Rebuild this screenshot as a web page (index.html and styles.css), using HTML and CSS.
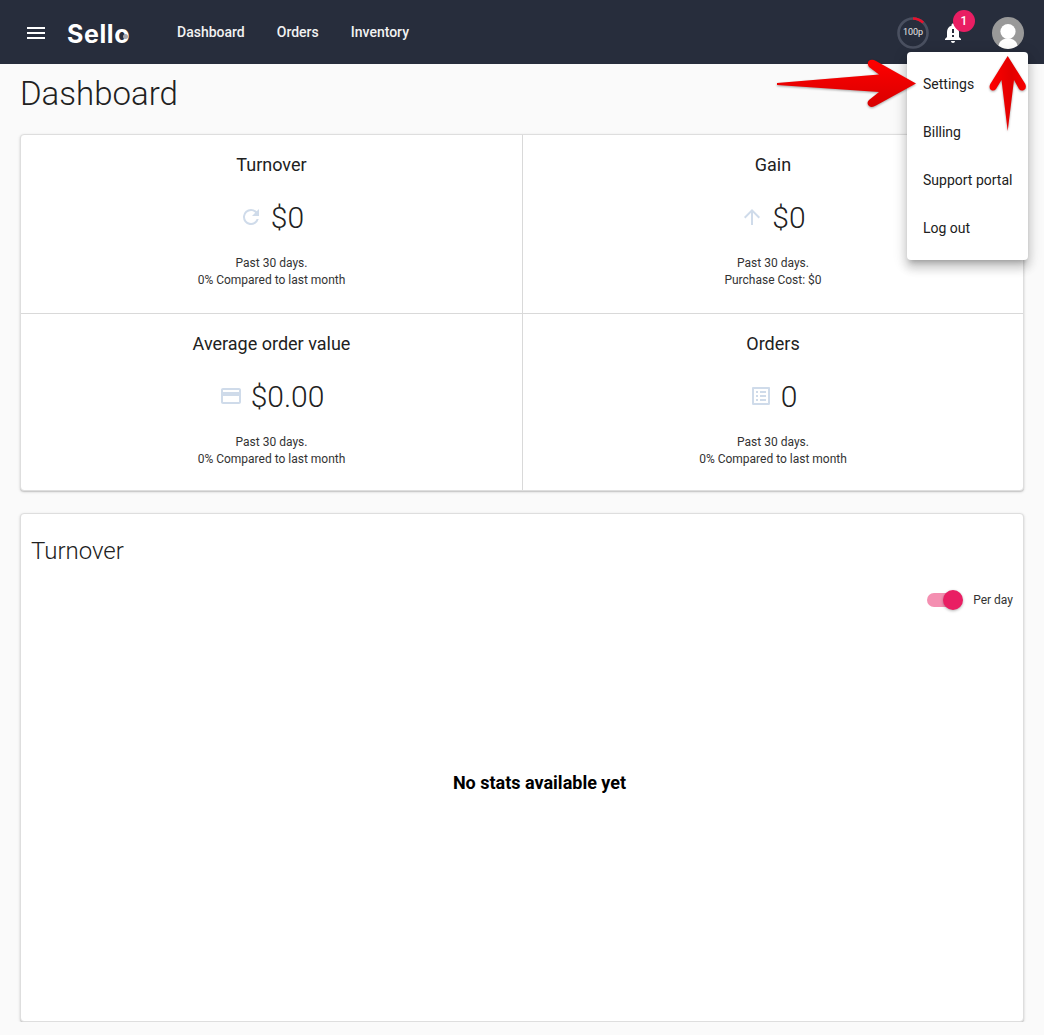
FILE: index.html
```html
<!DOCTYPE html>
<html lang="en">
<head>
  <meta charset="UTF-8">
  <title>Sello Dashboard</title>
  <link rel="stylesheet" href="styles.css">
</head>
<body>
  <header class="topbar">
    <button class="menu-btn" aria-label="Menu"><span></span><span></span><span></span></button>
    <div class="logo">Sello<i class="logo-dot"></i></div>
    <nav class="nav">
      <a>Dashboard</a>
      <a>Orders</a>
      <a>Inventory</a>
    </nav>
    <div class="topbar-right">
      <div class="quota">
        <svg width="32" height="32" viewBox="0 0 32 32">
          <circle cx="16" cy="16" r="14.5" fill="none" stroke="#4a5060" stroke-width="2.6"/>
          <path d="M16 1.5A14.5 14.5 0 0 1 26.2 5.7" fill="none" stroke="#e8112d" stroke-width="2.6"/>
        </svg>
        <span>100p</span>
      </div>
      <div class="bell">
        <svg width="24" height="24" viewBox="0 0 24 24"><path fill="#fff" d="M12 22c1.1 0 2-.9 2-2h-4c0 1.1.9 2 2 2zm6-6v-5c0-3.07-1.63-5.64-4.5-6.32V4c0-.83-.67-1.5-1.5-1.5s-1.5.67-1.5 1.5v.68C7.64 5.36 6 7.92 6 11v5l-2 2v1h16v-1l-2-2zm-5 0h-2v-2h2v2zm0-4h-2V8h2v4z"/></svg>
        <span class="badge">1</span>
      </div>
      <div class="avatar">
        <svg width="32" height="32" viewBox="0 0 32 32">
          <circle cx="16" cy="16" r="16" fill="#999"/>
          <circle cx="16" cy="14.500" r="7.600" fill="#fff"/>
          <path d="M6.500 28.800C7 24.200 11 21.500 16 21.500s9 2.700 9.500 7.300A16 16 0 0 1 6.500 28.800z" fill="#fff"/>
        </svg>
      </div>
    </div>
  </header>

  <main class="page">
    <h1 class="page-title">Dashboard</h1>

    <section class="card stats">
      <div class="stat">
        <h3>Turnover</h3>
        <div class="stat-value">
          <svg class="stat-icon" width="24" height="24" viewBox="0 0 24 24"><path d="M17.650 6.350A7.960 7.960 0 0 0 12 4a8 8 0 1 0 7.730 10h-2.080A6 6 0 1 1 12 6c1.660 0 3.140.690 4.220 1.780L13 11h7V4l-2.350 2.350z"/></svg>
          <span>$0</span>
        </div>
        <p>Past 30 days.<br>0% Compared to last month</p>
      </div>
      <div class="stat">
        <h3>Gain</h3>
        <div class="stat-value">
          <svg class="stat-icon" width="24" height="24" viewBox="0 0 24 24"><path d="M4 12l1.410 1.410L11 7.830V20h2V7.830l5.580 5.590L20 12l-8-8-8 8z"/></svg>
          <span>$0</span>
        </div>
        <p>Past 30 days.<br>Purchase Cost: $0</p>
      </div>
      <div class="stat">
        <h3>Average order value</h3>
        <div class="stat-value">
          <svg class="stat-icon" width="24" height="24" viewBox="0 0 24 24"><path d="M20 4H4c-1.110 0-2 .890-2 2v12c0 1.110.890 2 2 2h16c1.110 0 2-.890 2-2V6c0-1.110-.890-2-2-2zm0 14H4v-6h16v6zm0-10H4V6h16v2z"/></svg>
          <span>$0.00</span>
        </div>
        <p>Past 30 days.<br>0% Compared to last month</p>
      </div>
      <div class="stat">
        <h3>Orders</h3>
        <div class="stat-value">
          <svg class="stat-icon" width="24" height="24" viewBox="0 0 24 24"><path d="M19 5v14H5V5h14m1.100-2H3.900c-.500 0-.900.400-.900.900v16.200c0 .400.400.900.900.900h16.200c.400 0 .900-.500.900-.900V3.900c0-.500-.500-.900-.900-.900zM11 7h6v2h-6V7zm0 4h6v2h-6v-2zm0 4h6v2h-6v-2zM7 7h2v2H7V7zm0 4h2v2H7v-2zm0 4h2v2H7v-2z"/></svg>
          <span>0</span>
        </div>
        <p>Past 30 days.<br>0% Compared to last month</p>
      </div>
    </section>

    <section class="card chart">
      <h2>Turnover</h2>
      <div class="toggle-row">
        <div class="toggle"><span class="thumb"></span></div>
        <label>Per day</label>
      </div>
      <div class="empty">No stats available yet</div>
    </section>
  </main>

  <ul class="dropdown">
    <li>Settings</li>
    <li>Billing</li>
    <li>Support portal</li>
    <li>Log out</li>
  </ul>

  <svg class="arrows" width="1044" height="140" viewBox="0 0 1044 140">
    <defs>
      <linearGradient id="arrowRight" x1="0" y1="0" x2="0" y2="1">
        <stop offset="0" stop-color="#ff0000"/>
        <stop offset="1" stop-color="#d80000"/>
      </linearGradient>
      <linearGradient id="arrowUp" x1="0" y1="0" x2="1" y2="0">
        <stop offset="0" stop-color="#ff0000"/>
        <stop offset="0.600" stop-color="#e20000"/>
        <stop offset="1" stop-color="#f80000"/>
      </linearGradient>
    </defs>
    <path class="arrow" d="M777 83L879 74.500L869 67Q866 62 870 60Q873 59 876 61L916 83.500L876 105.500Q872 108 869 106Q866 103 869 100L879 92L777 85Z" fill="url(#arrowRight)"/>
    <path class="arrow" d="M1007.700 56L1025.300 84Q1027 88 1024 90Q1021 91.500 1019 89L1014 80L1007.700 131L1001.500 80L996 89Q994 91.500 991 90Q988.500 88 990.300 84Z" fill="url(#arrowUp)"/>
  </svg>
</body>
</html>
```

FILE: styles.css
```css
* {
  box-sizing: border-box;
}

body {
  margin: 0;
  background: #fafafa;
  color: #212121;
  font-family: Roboto, 'Liberation Sans', sans-serif;
}

.topbar {
  display: flex;
  align-items: center;
  height: 64px;
  padding: 0 20px 0 27px;
  background: #272d3c;
  color: #fff;
}

.menu-btn {
  display: flex;
  flex-direction: column;
  gap: 3px;
  width: 18px;
  padding: 0;
  margin-top: 1px;
  background: none;
  border: 0;
}

.menu-btn span {
  display: block;
  height: 2px;
  background: #fff;
}

.logo {
  position: relative;
  width: 66px;
  margin-top: 3px;
  margin-left: 22px;
  font-family: Inter, sans-serif;
  font-size: 25px;
  font-weight: 700;
  letter-spacing: 0.6px;
}

.logo-dot {
  position: absolute;
  right: 5px;
  top: 15px;
  width: 5px;
  height: 5px;
  border-radius: 50%;
  background: #a4a7b0;
}

.nav {
  display: flex;
  gap: 32px;
  margin-left: 44px;
}

.nav a {
  font-size: 14px;
  font-weight: 500;
  color: #f2f2f2;
}

.topbar-right {
  display: flex;
  align-items: center;
  margin-top: 2px;
  margin-left: auto;
}

.quota {
  position: relative;
  width: 32px;
  height: 32px;
  margin-top: -1px;
}

.quota svg {
  display: block;
}

.quota span {
  position: absolute;
  top: 9px;
  left: 0;
  width: 32px;
  text-align: center;
  font-size: 9px;
  line-height: 12px;
  color: #e6e6e6;
}

.bell {
  position: relative;
  width: 24px;
  height: 24px;
  margin-left: 12px;
}

.badge {
  position: absolute;
  top: -11px;
  left: 12px;
  width: 22px;
  height: 22px;
  border-radius: 50%;
  background: #e91e63;
  color: #fff;
  font-size: 12px;
  font-weight: 500;
  line-height: 22px;
  text-align: center;
}

.avatar {
  width: 32px;
  height: 32px;
  margin-left: 27px;
}

.avatar svg {
  display: block;
}

.page {
  padding: 0 20px;
}

.page-title {
  height: 70px;
  margin: 0;
  padding-top: 10px;
  font-size: 33px;
  line-height: 40px;
  font-weight: 300;
}

.card {
  width: 1004px;
  background: #fff;
  border: 1px solid #dedede;
  border-radius: 4px;
  box-shadow: 0 1px 3px rgba(0,0,0,0.16), 0 1px 1px rgba(0,0,0,0.1);
}

.stats {
  display: grid;
  grid-template-columns: 502px 1fr;
  grid-template-rows: 179px 1fr;
  height: 357px;
}

.stat {
  padding-top: 19px;
  text-align: center;
  border-bottom: 1px solid #d9d9d9;
}

.stat:nth-child(odd) {
  border-right: 1px solid #d9d9d9;
}

.stat:nth-child(n+3) {
  border-bottom: 0;
}

.stat h3 {
  margin: 0;
  font-size: 18px;
  line-height: 22px;
  font-weight: 400;
}

.stat-value {
  display: flex;
  justify-content: center;
  align-items: center;
  gap: 8px;
  height: 44px;
  margin-top: 19px;
  font-size: 30px;
  font-weight: 300;
}

.stat-icon {
  fill: #cfdbea;
}

.stat p {
  margin: 16px 0 0;
  font-size: 12px;
  line-height: 17px;
  color: #333;
}

.chart {
  height: 509px;
  margin-top: 22px;
  padding: 0 10px;
}

.chart h2 {
  margin: 0;
  padding-top: 22px;
  font-size: 24px;
  line-height: 30px;
  font-weight: 300;
}

.toggle-row {
  display: flex;
  justify-content: flex-end;
  align-items: center;
  gap: 12px;
  height: 24px;
  margin-top: 22px;
  font-size: 12px;
  color: #333;
}

.toggle {
  position: relative;
  width: 34px;
  height: 14px;
  border-radius: 7px;
  background: #f48fb1;
}

.thumb {
  position: absolute;
  top: -3px;
  right: -2px;
  width: 20px;
  height: 20px;
  border-radius: 50%;
  background: #e91e63;
  box-shadow: 0 1px 3px rgba(0,0,0,0.3);
}

.empty {
  margin-top: 160px;
  padding-left: 35px;
  text-align: center;
  font-size: 18px;
  font-weight: 700;
  line-height: 22px;
  color: #000;
}

.dropdown {
  position: absolute;
  top: 52px;
  left: 907px;
  width: 121px;
  margin: 0;
  padding: 8px 0;
  list-style: none;
  background: #fff;
  border-radius: 4px;
  box-shadow: 0 5px 5px -3px rgba(0,0,0,0.2), 0 8px 10px 1px rgba(0,0,0,0.14), 0 3px 14px 2px rgba(0,0,0,0.12);
}

.dropdown li {
  height: 48px;
  padding: 0 16px;
  font-size: 14px;
  line-height: 48px;
  white-space: nowrap;
}

.arrows {
  position: absolute;
  top: 0;
  left: 0;
  pointer-events: none;
}

.arrow {
  filter: drop-shadow(0 1px 1px rgba(0,0,0,0.35));
}
```
